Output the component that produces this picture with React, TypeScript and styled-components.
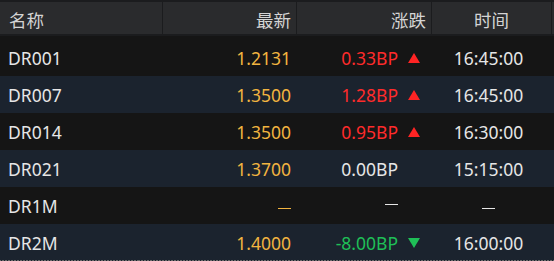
import styled, { createGlobalStyle } from "styled-components";

const GlobalStyle = createGlobalStyle`
  html, body {
    margin: 0;
    padding: 0;
    background: #151515;
  }
  body {
    font-family: "Noto Sans", "Open Sans", "Noto Sans CJK SC", sans-serif;
  }
`;

const COLUMNS = "162px 133px 134px 119px 1fr";

const Table = styled.div`
  width: 554px;
  height: 261px;
  overflow: hidden;
  background: #151515;
  display: flex;
  flex-direction: column;
`;

const HeaderRow = styled.div`
  display: grid;
  grid-template-columns: ${COLUMNS};
  column-gap: 1px;
  height: 37px;
  box-sizing: border-box;
  padding: 2px 0 2px;
  background: #1b1c1e;
  margin-bottom: 3px;
`;

const HeaderCell = styled.div<{ $align: "left" | "right" | "center" }>`
  display: flex;
  align-items: center;
  justify-content: ${(p) =>
    p.$align === "left" ? "flex-start" : p.$align === "right" ? "flex-end" : "center"};
  padding: 3px ${(p) => (p.$align === "right" ? "5px" : "0")} 0
    ${(p) => (p.$align === "left" ? "9px" : "0")};
  background: #2a2b2d;
  color: #d4d4d4;
  font-family: "Noto Sans CJK SC", sans-serif;
  font-size: 17.5px;
`;

const Row = styled.div<{ $striped: boolean }>`
  display: grid;
  grid-template-columns: ${COLUMNS};
  height: 37px;
  flex-shrink: 0;
  align-items: center;
  background: ${(p) => (p.$striped ? "#1b232e" : "#151515")};
  color: #e6e6e6;
  font-size: 17.5px;

  &:last-child {
    height: 36px;
    box-sizing: content-box;
    border-bottom: 1px solid transparent;
    border-image: repeating-linear-gradient(
        90deg,
        #6a6a6a 0 2px,
        transparent 2px 3px
      )
      1;
  }
`;

const NameCell = styled.div`
  padding-left: 8px;
  padding-top: 1px;
`;

const PriceCell = styled.div`
  text-align: right;
  padding-right: 4px;
  padding-top: 1px;
  color: #f2b440;
`;

const ChangeCell = styled.div<{ $dir: "up" | "down" | "flat" }>`
  display: flex;
  align-items: center;
  justify-content: flex-end;
  padding-top: 1px;
  color: ${(p) =>
    p.$dir === "up" ? "#ff2b2b" : p.$dir === "down" ? "#1fbf57" : "#e6e6e6"};
`;

const ArrowSlot = styled.span`
  width: 31px;
  display: flex;
  align-items: center;
  padding-left: 10px;
  box-sizing: border-box;
`;

const TimeCell = styled.div`
  text-align: center;
  padding-top: 1px;
`;

const Dash = styled.span<{ $color?: string }>`
  display: inline-block;
  width: 13px;
  height: 1px;
  margin-bottom: 4px;
  background: ${(p) => p.$color ?? "#e6e6e6"};
`;

const Arrow = ({ dir }: { dir: "up" | "down" }) => (
  <svg width="12" height="10" viewBox="0 0 12 10">
    {dir === "up" ? (
      <polygon points="6,0 12,10 0,10" fill="#ff2424" />
    ) : (
      <polygon points="0,0 12,0 6,10" fill="#1fbf57" />
    )}
  </svg>
);

type Quote = {
  name: string;
  price: string | null;
  change: string | null;
  dir: "up" | "down" | "flat";
  time: string | null;
};

const quotes: Quote[] = [
  { name: "DR001", price: "1.2131", change: "0.33BP", dir: "up", time: "16:45:00" },
  { name: "DR007", price: "1.3500", change: "1.28BP", dir: "up", time: "16:45:00" },
  { name: "DR014", price: "1.3500", change: "0.95BP", dir: "up", time: "16:30:00" },
  { name: "DR021", price: "1.3700", change: "0.00BP", dir: "flat", time: "15:15:00" },
  { name: "DR1M", price: null, change: null, dir: "flat", time: null },
  { name: "DR2M", price: "1.4000", change: "-8.00BP", dir: "down", time: "16:00:00" },
];

const App = () => {
  return (
    <>
      <GlobalStyle />
      <Table>
        <HeaderRow>
          <HeaderCell $align="left">名称</HeaderCell>
          <HeaderCell $align="right">最新</HeaderCell>
          <HeaderCell $align="right">涨跌</HeaderCell>
          <HeaderCell $align="center">时间</HeaderCell>
          <HeaderCell $align="center" />
        </HeaderRow>
        {quotes.map((q, i) => (
          <Row key={q.name} $striped={i % 2 === 1}>
            <NameCell>{q.name}</NameCell>
            <PriceCell>{q.price ?? <Dash $color="#f2b440" />}</PriceCell>
            <ChangeCell $dir={q.dir}>
              {q.change ?? <Dash />}
              <ArrowSlot>{q.dir !== "flat" && <Arrow dir={q.dir} />}</ArrowSlot>
            </ChangeCell>
            <TimeCell>{q.time ?? <Dash />}</TimeCell>
            <div />
          </Row>
        ))}
      </Table>
    </>
  );
};

export default App;
